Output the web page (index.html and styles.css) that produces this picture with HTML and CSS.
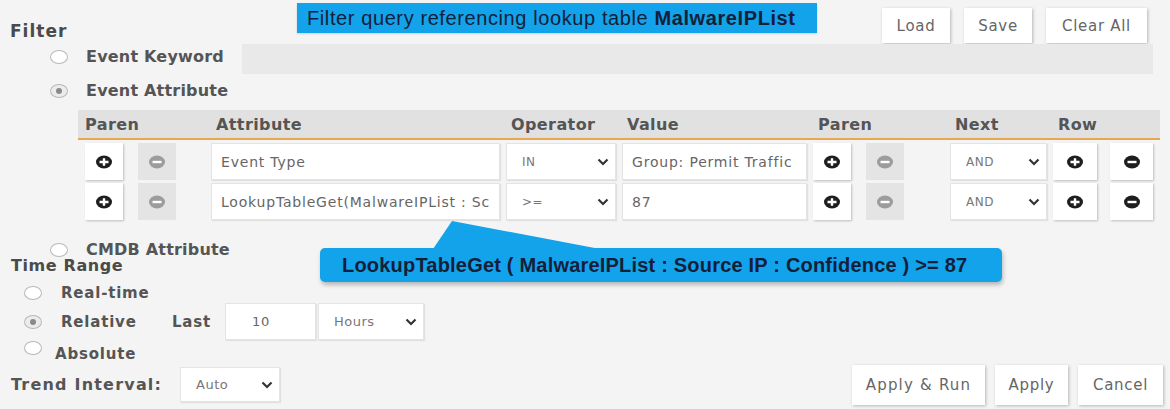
FILE: index.html
```html
<!DOCTYPE html>
<html lang="en">
<head>
    <meta charset="UTF-8">
    <meta name="viewport" content="width=device-width, initial-scale=1.0">
    <title>Filter</title>
    <link rel="stylesheet" href="styles.css">
</head>
<body>
    <svg width="0" height="0" class="defs">
        <symbol id="plus" viewBox="0 0 18 14">
            <ellipse cx="9" cy="7" rx="8" ry="6.5" fill="#1e1e1e"/>
            <path d="M4.5 7h9M9 3.2v7.6" stroke="#fff" stroke-width="2.4"/>
        </symbol>
        <symbol id="minus" viewBox="0 0 18 14">
            <ellipse cx="9" cy="7" rx="8" ry="6.5" fill="currentColor"/>
            <path d="M4.5 7h9" stroke="#fff" stroke-width="2.4"/>
        </symbol>
        <symbol id="chev" viewBox="0 0 12 8">
            <path d="M1.5 1.5l4.5 4.5l4.5-4.5" fill="none" stroke="#333" stroke-width="2.2"/>
        </symbol>
    </svg>

    <div class="panel">
        <div class="note note-top">Filter query referencing lookup table <b>MalwareIPList</b></div>

        <div class="filter-head">
            <h2 class="title">Filter</h2>
            <div class="actions">
                <button class="btn btn-load">Load</button>
                <button class="btn btn-save">Save</button>
                <button class="btn btn-clear">Clear All</button>
            </div>
        </div>

        <div class="opt-row keyword-row">
            <span class="radio"></span>
            <span class="opt-label keyword-label">Event Keyword</span>
            <div class="keyword-input"></div>
        </div>

        <div class="opt-row attr-row">
            <span class="radio checked"></span>
            <span class="opt-label">Event Attribute</span>
        </div>

        <div class="grid">
            <div class="grid-head">
                <span class="span2 first">Paren</span>
                <span>Attribute</span>
                <span>Operator</span>
                <span>Value</span>
                <span class="span2">Paren</span>
                <span>Next</span>
                <span class="span2">Row</span>
            </div>

            <div class="grid-row">
                <button class="ibtn"><svg><use href="#plus"/></svg></button>
                <button class="ibtn off"><svg><use href="#minus"/></svg></button>
                <div class="field attr">Event Type</div>
                <div class="field sel op">IN<svg class="chev"><use href="#chev"/></svg></div>
                <div class="field val">Group: Permit Traffic</div>
                <button class="ibtn"><svg><use href="#plus"/></svg></button>
                <button class="ibtn off"><svg><use href="#minus"/></svg></button>
                <div class="field sel next">AND<svg class="chev"><use href="#chev"/></svg></div>
                <button class="ibtn wide"><svg><use href="#plus"/></svg></button>
                <button class="ibtn wide dark"><svg><use href="#minus"/></svg></button>
            </div>

            <div class="grid-row">
                <button class="ibtn"><svg><use href="#plus"/></svg></button>
                <button class="ibtn off"><svg><use href="#minus"/></svg></button>
                <div class="field attr">LookupTableGet(MalwareIPList : Sc</div>
                <div class="field sel op">&gt;=<svg class="chev"><use href="#chev"/></svg></div>
                <div class="field val">87</div>
                <button class="ibtn"><svg><use href="#plus"/></svg></button>
                <button class="ibtn off"><svg><use href="#minus"/></svg></button>
                <div class="field sel next">AND<svg class="chev"><use href="#chev"/></svg></div>
                <button class="ibtn wide"><svg><use href="#plus"/></svg></button>
                <button class="ibtn wide dark"><svg><use href="#minus"/></svg></button>
            </div>
        </div>

        <div class="opt-row cmdb-row">
            <span class="radio"></span>
            <span class="opt-label">CMDB Attribute</span>
        </div>

        <h2 class="title time-title">Time Range</h2>

        <div class="time-row realtime">
            <span class="radio"></span>
            <span class="time-label">Real-time</span>
        </div>

        <div class="time-row relative">
            <span class="radio checked"></span>
            <span class="time-label">Relative</span>
            <span class="last">Last</span>
            <div class="field num">10</div>
            <div class="field sel unit">Hours<svg class="chev"><use href="#chev"/></svg></div>
        </div>

        <div class="time-row absolute-row">
            <span class="radio"></span>
            <span class="time-label">Absolute</span>
        </div>

        <div class="trend-row">
            <span class="trend-label">Trend Interval:</span>
            <div class="field sel trend">Auto<svg class="chev"><use href="#chev"/></svg></div>
            <div class="footer-actions">
                <button class="btn btn-run">Apply &amp; Run</button>
                <button class="btn btn-apply">Apply</button>
                <button class="btn btn-cancel">Cancel</button>
            </div>
        </div>

        <div class="note note-callout">LookupTableGet ( MalwareIPList : Source IP : Confidence ) &gt;= 87</div>
    </div>
</body>
</html>
```

FILE: styles.css
```css
* {
    margin: 0;
    padding: 0;
    box-sizing: border-box;
}

body {
    font-family: "DejaVu Sans", Verdana, sans-serif;
    background: #f4f4f4;
    color: #555;
    width: 1170px;
    height: 409px;
    overflow: hidden;
}

.defs {
    position: absolute;
}

.panel {
    position: relative;
    padding-top: 8px;
    height: 409px;
}

/* annotations laid over the form */
.note {
    position: absolute;
    background: #12a3ea;
    color: #14203a;
    font-family: "Liberation Sans", Arial, sans-serif;
    white-space: nowrap;
}

.note-top {
    left: 297px;
    top: 3px;
    width: 520px;
    height: 30px;
    line-height: 30px;
    padding-left: 10px;
    font-size: 20px;
    letter-spacing: 0.6px;
    box-shadow: 0 1px 2px rgba(0,0,0,0.15);
}

.note-callout {
    left: 320px;
    top: 248px;
    width: 682px;
    height: 34px;
    line-height: 34px;
    padding-left: 22px;
    font-size: 20px;
    letter-spacing: 0.2px;
    font-weight: bold;
    border-radius: 5px;
    box-shadow: 1px 3px 4px rgba(0,0,0,0.25);
}

.note-callout::before {
    content: "";
    position: absolute;
    left: 113px;
    top: -27px;
    width: 167px;
    height: 28px;
    background: #12a3ea;
    clip-path: polygon(0 100%, 19px 0, 100% 100%);
}

.title {
    font-size: 16px;
    font-weight: bold;
    color: #4a4a4a;
    letter-spacing: 0.6px;
    line-height: 20px;
}

.filter-head {
    display: flex;
    align-items: flex-start;
    height: 35px;
    padding-left: 10px;
}

.filter-head .title {
    margin-top: 13px;
    font-size: 17px;
    letter-spacing: 1px;
}

.actions {
    margin-left: auto;
    margin-right: 23px;
    display: flex;
    gap: 14px;
}

.btn {
    height: 35px;
    background: #fff;
    border: none;
    font-family: "DejaVu Sans", Verdana, sans-serif;
    font-size: 15px;
    letter-spacing: 0.7px;
    color: #666;
    box-shadow: 1px 1px 3px rgba(0,0,0,0.25);
}

.btn-load { width: 68px; }
.btn-save { width: 68px; }
.btn-clear { width: 101px; }

.opt-row {
    display: flex;
    align-items: center;
    padding-left: 50px;
}

.radio {
    width: 18px;
    height: 14px;
    border-radius: 50%;
    border: 1px solid #b8b8b8;
    background: #fff;
    flex: none;
    position: relative;
}

.radio.checked {
    background: #ececec;
}

.radio.checked::after {
    content: "";
    position: absolute;
    left: 5px;
    top: 3px;
    width: 6px;
    height: 6px;
    border-radius: 50%;
    background: #8a8a8a;
}

.opt-label {
    margin-left: 18px;
    font-size: 16px;
    font-weight: bold;
    letter-spacing: 0.2px;
    line-height: 16px;
}

.keyword-row {
    margin-top: 1px;
    height: 30px;
}

.keyword-row .radio {
    margin-top: -4px;
}

.keyword-label {
    width: 156px;
    margin-top: -4px;
}

.keyword-input {
    width: 911px;
    height: 30px;
    background: #e9e9e9;
}

.attr-row {
    margin-top: 4px;
    height: 26px;
}

.grid {
    margin: 6px 10px 0 78px;
}

.grid-head,
.grid-row {
    display: grid;
    grid-template-columns: 53px 73px 295px 116px 191px 53px 84px 103px 57px 1fr;
    padding-left: 7px;
}

.grid-head {
    height: 30px;
    background: #e1e1e1;
    border-bottom: 2px solid #e9a750;
    align-items: center;
    font-size: 16px;
    font-weight: bold;
    letter-spacing: 0.4px;
}

.grid-head span {
    padding-left: 5px;
}

.grid-head .first {
    padding-left: 0;
}

.span2 {
    grid-column: span 2;
}

.grid-row {
    height: 37px;
    margin-top: 3px;
}

.ibtn {
    width: 38px;
    height: 37px;
    border: none;
    background: #fff;
    box-shadow: 1px 1px 2px rgba(0,0,0,0.22);
    display: flex;
    align-items: center;
    justify-content: center;
    color: #1e1e1e;
}

.ibtn svg {
    width: 18px;
    height: 14px;
}

.ibtn.off {
    background: #e4e4e4;
    box-shadow: none;
    color: #9c9c9c;
}

.ibtn.wide {
    width: 44px;
}

.ibtn.dark {
    width: 43px;
    color: #1e1e1e;
}

.field {
    height: 37px;
    background: #fff;
    border: 1px solid #e4e4e4;
    box-shadow: 1px 1px 1px rgba(0,0,0,0.08);
    display: flex;
    align-items: center;
    padding-left: 9px;
    font-size: 14px;
    letter-spacing: 0.8px;
    color: #666;
    white-space: nowrap;
    overflow: hidden;
}

.field.attr { width: 289px; }
.field.val { width: 185px; }

.sel {
    font-size: 12px;
    letter-spacing: 0.5px;
    color: #777;
    padding-left: 15px;
}

.field.op { width: 110px; }
.field.next { width: 97px; }

.chev {
    width: 12px;
    height: 8px;
    margin-left: auto;
    margin-right: 6px;
    flex: none;
}

.cmdb-row {
    margin-top: 22px;
    height: 16px;
}

.time-title {
    padding-left: 11px;
    line-height: 16px;
}

.time-row {
    display: flex;
    align-items: center;
    padding-left: 24px;
}

.time-label {
    margin-left: 19px;
    width: 111px;
    font-size: 15px;
    font-weight: bold;
    letter-spacing: 0.8px;
}

.realtime {
    margin-top: 9px;
    height: 20px;
}

.relative {
    height: 37px;
}

.last {
    width: 53px;
    font-size: 15px;
    font-weight: bold;
    letter-spacing: 0.8px;
}

.field.num {
    width: 91px;
    padding-left: 26px;
    font-size: 13px;
}

.field.unit {
    width: 106px;
    margin-left: 2px;
    padding-left: 15px;
    font-size: 13px;
}

.absolute-row {
    height: 24px;
    align-items: flex-start;
}

.absolute-row .radio {
    margin-top: 1px;
}

.absolute-row .time-label {
    margin-left: 13px;
    margin-top: 6px;
    line-height: 16px;
}

.trend-row {
    display: flex;
    align-items: center;
    height: 41px;
    padding-left: 11px;
}

.trend-label {
    width: 169px;
    font-size: 16px;
    font-weight: bold;
    letter-spacing: 1.2px;
}

.field.trend {
    width: 100px;
    height: 35px;
    font-size: 13px;
}

.footer-actions {
    margin-left: auto;
    margin-right: 7px;
    display: flex;
    gap: 10px;
}

.footer-actions .btn {
    height: 40px;
}

.btn-run { width: 133px; letter-spacing: 1.2px; }
.btn-apply { width: 73px; }
.btn-cancel { width: 85px; }
```
